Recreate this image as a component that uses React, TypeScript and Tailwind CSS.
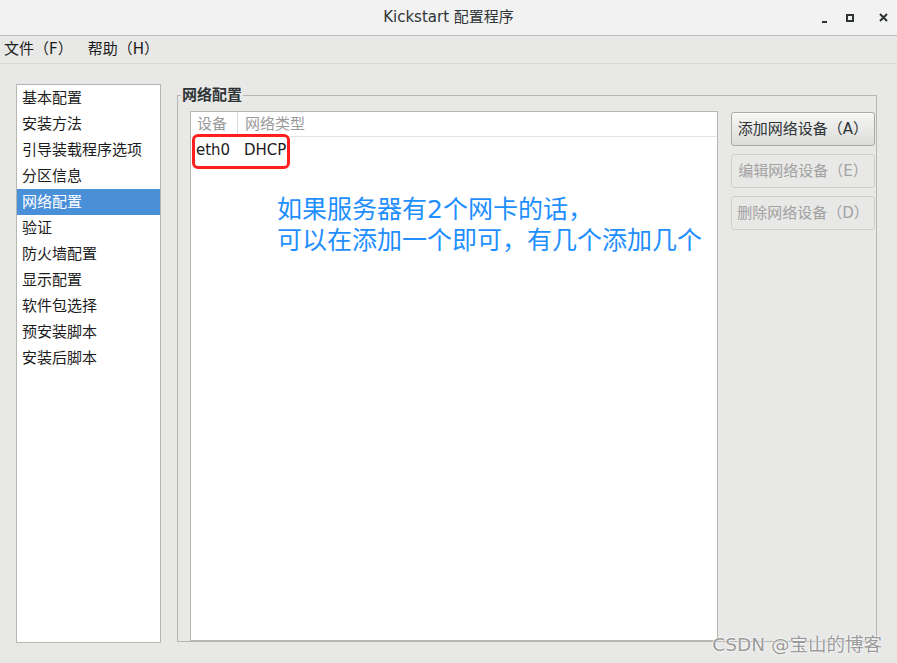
const items = ['基本配置', '安装方法', '引导装载程序选项', '分区信息', '网络配置', '验证', '防火墙配置', '显示配置', '软件包选择', '预安装脚本', '安装后脚本'];

const font = { fontFamily: '"DejaVu Sans", "Noto Sans CJK SC", sans-serif' };

export default function App() {
  return (
    <div
      className="relative w-[897px] h-[663px] bg-[#e8e8e7] flex flex-col text-[15px] text-[#1c1c1c] overflow-hidden"
      style={font}
    >
      {/* title bar */}
      <div className="relative h-[36px] shrink-0 bg-[#f2f2f2] border-b border-[#bcbcba] flex items-center justify-center text-[#2e3436]">
        <span>Kickstart 配置程序</span>
        <div className="absolute right-[9px] top-0 h-full flex items-center">
          <div className="w-[5px] h-[2px] bg-[#2e3436] mt-[8px]" />
          <div className="ml-[19px] w-[8px] h-[8px] border-2 border-[#2e3436]" />
          <svg className="ml-[25px]" width="9" height="9" viewBox="0 0 9 9">
            <path d="M1 1L8 8M8 1L1 8" stroke="#2e3436" strokeWidth="2" />
          </svg>
        </div>
      </div>

      {/* menu bar */}
      <div className="h-[28px] shrink-0 border-b border-[#d9d9d7] flex items-center pl-[4px] gap-[15px]">
        <span>文件（F）</span>
        <span>帮助（H）</span>
      </div>

      {/* body */}
      <div className="flex pt-[20px] pl-[16px]">
        <div className="w-[145px] h-[559px] bg-white border border-[#b6b6b3]">
          {items.map((it) => (
            <div
              key={it}
              className={
                it === '网络配置'
                  ? 'h-[26px] pl-[5px] flex items-center bg-[#4a90d9] text-white'
                  : 'h-[26px] pl-[5px] flex items-center'
              }
            >
              {it}
            </div>
          ))}
        </div>

        <div className="relative ml-[16px] mt-[11px] w-[700px] h-[547px] border border-[#b6b6b3] flex pl-[12px] pt-[15px] pr-[1px]">
          <span className="absolute -top-[11px] left-[3px] px-[1px] bg-[#e8e8e7] font-bold text-[#2e3436] leading-[20px]">
            网络配置
          </span>

          {/* table */}
          <div className="relative w-[528px] h-[531px] bg-white border border-[#b6b6b3] border-b-2">
            <div className="h-[25px] flex items-center border-b border-[#e3e3e1] text-[#9a9a9a]">
              <div className="w-[47px] h-full pl-[6px] flex items-center border-r border-[#dcdcda]">设备</div>
              <div className="pl-[7px]">网络类型</div>
            </div>
            <div className="h-[26px] flex items-center">
              <div className="w-[48px] pl-[5px]">eth0</div>
              <div className="pl-[5px]">DHCP</div>
            </div>

            <div className="absolute left-[1px] top-[22px] w-[98px] h-[35px] border-[3px] border-[#ff1f1f] rounded-[6px]" />

            <div className="absolute left-[86px] top-[82px] text-[25px] leading-[31px] text-[#1f8fff]">
              <div>如果服务器有2个网卡的话，</div>
              <div>可以在添加一个即可，有几个添加几个</div>
            </div>
          </div>

          {/* buttons */}
          <div className="ml-[13px] flex flex-col gap-[8px] pt-[1px]">
            <button className="w-[144px] h-[34px] rounded-[3px] border border-[#a8a8a5] bg-gradient-to-b from-[#f6f6f5] to-[#dcdcda] text-[#2e3436] shadow-[inset_0_1px_0_#ffffff]">
              添加网络设备（A）
            </button>
            <button className="w-[144px] h-[34px] rounded-[3px] border border-[#cfcfcd] bg-[#e8e8e7] text-[#a2a2a2]">
              编辑网络设备（E）
            </button>
            <button className="w-[144px] h-[34px] rounded-[3px] border border-[#cfcfcd] bg-[#e8e8e7] text-[#a2a2a2]">
              删除网络设备（D）
            </button>
          </div>
        </div>
      </div>

      <div
        className="absolute right-[15px] bottom-[9px] text-[18.5px] text-[#9b9b9b] leading-none"
        style={{ textShadow: '0 0 2px #fff, 0 0 2px #fff' }}
      >
        CSDN @宝山的博客
      </div>
    </div>
  );
}
